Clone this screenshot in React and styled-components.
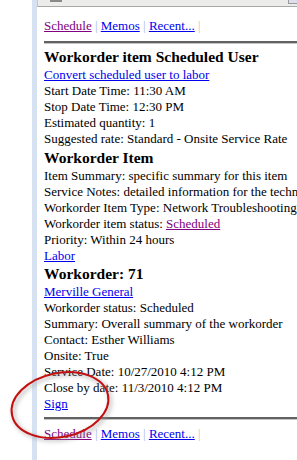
import React from "react";
import styled, { createGlobalStyle } from "styled-components";

const Global = createGlobalStyle`
  html, body { margin: 0; padding: 0; background: #fff; overflow: hidden; }
  body { width: 297px; height: 460px; }
`;

const Page = styled.div`
  display: flex;
  width: 297px;
  height: 460px;
  overflow: hidden;
  font-family: "Liberation Serif", "Times New Roman", serif;
  font-size: 13px;
  line-height: 16px;
  color: #000;
`;

const Gutter = styled.div`
  width: 32px;
  flex: none;
  background: #fff;
`;

const Stripe = styled.div`
  width: 5px;
  flex: none;
  background: #d6e2f2;
`;

const Main = styled.div`
  flex: 1;
  min-width: 0;
  display: flex;
  flex-direction: column;
  overflow: hidden;
  background: #fff;
`;

const TopBar = styled.div`
  height: 6px;
  flex: none;
  display: flex;
  align-items: flex-start;
  background: #ececea;
  border-bottom: 1px solid #a8a8a8;
  border-left: 1px solid #c8c8c8;
`;

const BarTab = styled.div`
  margin-left: 12px;
  width: 12px;
  height: 2px;
  background: #8a8a8a;
`;

const BarBox = styled.div`
  margin-left: auto;
  width: 8px;
  height: 3px;
  border: 1px solid #9a9a9a;
  border-top: none;
  border-right: none;
  background: #dde;
`;

const Content = styled.div`
  padding: 11px 0 0 7px;
  white-space: nowrap;
`;

const Nav = styled.div`
  height: 16px;
`;

const Link = styled.a`
  color: ${(p) => (p.$visited ? "#800080" : "#0000ee")};
  text-decoration: underline;
  cursor: pointer;
`;

const Sep = styled.span`
  color: ${(p) => p.$c};
`;

const Rule = styled.div`
  height: 2px;
  margin: ${(p) => p.$m};
  background: #626262;
  box-shadow: 0 1px 0 #c4c4c4;
`;

const Heading = styled.div`
  font-weight: bold;
  font-size: 15.5px;
  line-height: 20px;
  margin-top: ${(p) => p.$mt || 0}px;
`;

const Line = styled.div`
  height: 16px;
`;

const Annotation = styled.svg`
  position: absolute;
  left: 0;
  top: 360px;
  width: 130px;
  height: 100px;
  pointer-events: none;
`;

function NavBar() {
  return (
    <Nav>
      <Link $visited>Schedule</Link>
      <Sep $c="#a8b4f0"> | </Sep>
      <Link>Memos</Link>
      <Sep $c="#a8b4f0"> | </Sep>
      <Link>Recent...</Link>
      <Sep $c="#f0b0b0"> |</Sep>
    </Nav>
  );
}

export default function App() {
  return (
    <>
      <Global />
      <Page>
        <Gutter />
        <Stripe />
        <Main>
          <TopBar>
            <BarTab />
            <BarBox />
          </TopBar>
          <Content>
            <NavBar />
            <Rule $m="7px 0 4px 0" />
            <Heading>Workorder item Scheduled User</Heading>
            <Line><Link>Convert scheduled user to labor</Link></Line>
            <Line>Start Date Time: 11:30 AM</Line>
            <Line>Stop Date Time: 12:30 PM</Line>
            <Line>Estimated quantity: 1</Line>
            <Line>Suggested rate: Standard - Onsite Service Rate</Line>
            <Heading $mt={1}>Workorder Item</Heading>
            <Line>Item Summary: specific summary for this item</Line>
            <Line>Service Notes: detailed information for the technician</Line>
            <Line>Workorder Item Type: Network Troubleshooting</Line>
            <Line>Workorder item status: <Link $visited>Scheduled</Link></Line>
            <Line>Priority: Within 24 hours</Line>
            <Line><Link>Labor</Link></Line>
            <Heading>Workorder: 71</Heading>
            <Line><Link>Merville General</Link></Line>
            <Line>Workorder status: Scheduled</Line>
            <Line>Summary: Overall summary of the workorder</Line>
            <Line>Contact: Esther Williams</Line>
            <Line>Onsite: True</Line>
            <Line>Service Date: 10/27/2010 4:12 PM</Line>
            <Line>Close by date: 11/3/2010 4:12 PM</Line>
            <Line><Link>Sign</Link></Line>
            <Rule $m="5px 0 7px 0" />
            <NavBar />
          </Content>
        </Main>
      </Page>
      <Annotation viewBox="0 360 130 100">
        <defs>
          <filter id="sh" x="-20%" y="-20%" width="140%" height="140%">
            <feGaussianBlur stdDeviation="2" />
          </filter>
        </defs>
        <ellipse cx="62" cy="407" rx="49" ry="32" transform="rotate(-12 62 407)"
          fill="none" stroke="#999" strokeWidth="3" opacity="0.6" filter="url(#sh)" />
        <ellipse cx="60" cy="405" rx="49" ry="32" transform="rotate(-12 60 405)"
          fill="none" stroke="#c41010" strokeWidth="2" />
      </Annotation>
    </>
  );
}
